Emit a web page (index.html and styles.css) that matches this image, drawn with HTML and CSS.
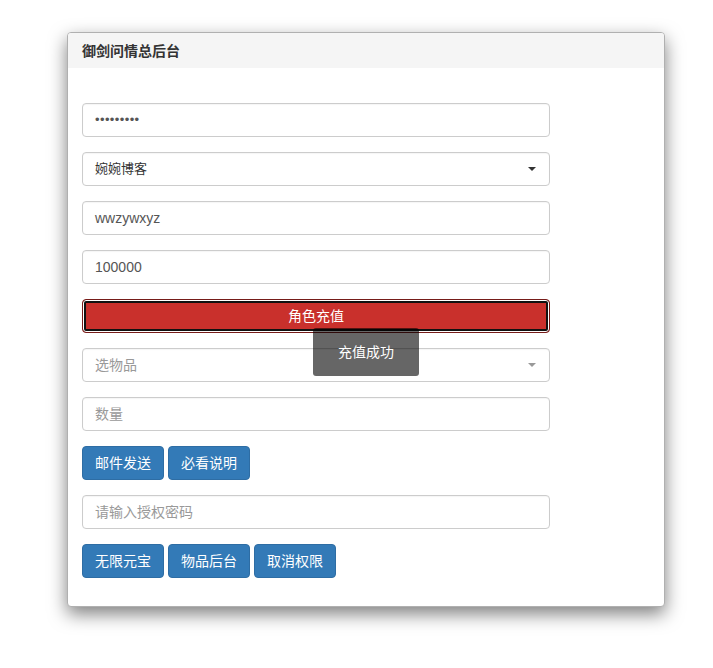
FILE: index.html
```html
<!DOCTYPE html>
<html lang="zh-CN">
<head>
<meta charset="utf-8">
<title>御剑问情总后台</title>
<link rel="stylesheet" href="styles.css">
</head>
<body>
<div class="page">
  <div class="panel">
    <div class="panel-heading">御剑问情总后台</div>
    <div class="panel-body">
      <div class="form">
        <div class="field"><div class="control pw">•••••••••</div></div>
        <div class="field"><div class="control select"><span>婉婉博客</span><span class="caret"></span></div></div>
        <div class="field"><div class="control">wwzywxyz</div></div>
        <div class="field"><div class="control">100000</div></div>
        <div class="field"><button class="btn-danger-focus">角色充值</button></div>
        <div class="field"><div class="control select placeholder"><span>选物品</span><span class="caret light"></span></div></div>
        <div class="field"><div class="control placeholder">数量</div></div>
        <div class="field btns">
          <button class="btn">邮件发送</button>
          <button class="btn">必看说明</button>
        </div>
        <div class="field"><div class="control placeholder">请输入授权密码</div></div>
        <div class="field btns last">
          <button class="btn">无限元宝</button>
          <button class="btn">物品后台</button>
          <button class="btn">取消权限</button>
        </div>
      </div>
    </div>
    <div class="toast">充值成功</div>
  </div>
</div>
</body>
</html>
```
FILE: styles.css
```css
* { box-sizing: border-box; }
html, body { margin: 0; padding: 0; background: #fff; }
body {
  font-family: "Liberation Sans", "Noto Sans CJK SC", sans-serif;
  font-size: 14px;
  line-height: 20px;
  color: #333;
}
.page {
  padding: 32px 0 61px 67px;
}
.panel {
  position: relative;
  width: 598px;
  height: 575px;
  background: #fff;
  border: 1px solid #b0b0b0;
  border-radius: 4px;
  box-shadow: 0 7px 18px rgba(0,0,0,.5);
}
.panel-heading {
  background: #f5f5f5;
  height: 35px;
  padding: 8px 14px 7px;
  font-size: 14px;
  font-weight: bold;
  color: #333;
  border-radius: 3px 3px 0 0;
}
.panel-body {
  padding: 35px 14px 0;
}
.form {
  width: 468px;
  display: flex;
  flex-direction: column;
  gap: 15px;
}
.control {
  height: 34px;
  border: 1px solid #ccc;
  border-radius: 4px;
  padding: 6px 12px;
  color: #555;
  background: #fff;
  box-shadow: inset 0 1px 1px rgba(0,0,0,.04);
}
.control.pw { font-size: 13px; letter-spacing: 0.4px; line-height: 20px; color: #555; }
.control.select {
  display: flex;
  align-items: center;
  justify-content: space-between;
  color: #333;
  font-size: 13px;
}
.control.placeholder { color: #999; }
.control.select.placeholder { color: #999; font-size: 14px; }
.caret {
  width: 0; height: 0;
  border-top: 4px solid #333;
  border-left: 4px solid transparent;
  border-right: 4px solid transparent;
  margin-right: 1px;
}
.caret.light { border-top-color: #999; }
.btn-danger-focus {
  width: 100%;
  height: 34px;
  font: inherit;
  font-size: 14px;
  color: #fff;
  background: #c9302c;
  border: 1px solid #761c19;
  border-radius: 4px;
  box-shadow: inset 0 0 0 1px #fff, inset 0 0 0 3px #111;
  padding: 0;
}
.btns {
  display: flex;
  gap: 4px;
}
.btn {
  height: 34px;
  padding: 6px 12px;
  font: inherit;
  font-size: 14px;
  color: #fff;
  background: #337ab7;
  border: 1px solid #2e6da4;
  border-radius: 4px;
}
.toast {
  position: absolute;
  left: 245px;
  top: 295px;
  width: 106px;
  height: 48px;
  background: rgba(0,0,0,.6);
  color: #fff;
  border-radius: 3px;
  display: flex;
  align-items: center;
  justify-content: center;
  font-size: 14px;
}
```
